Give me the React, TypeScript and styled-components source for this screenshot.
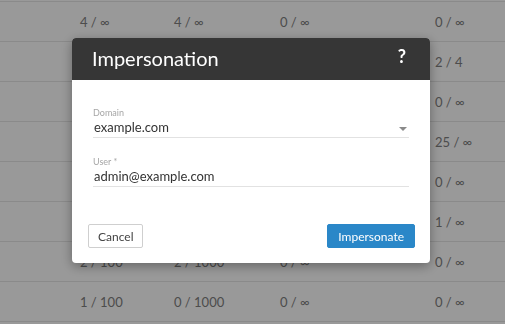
import React from 'react';
import styled, { createGlobalStyle } from 'styled-components';

const GlobalStyle = createGlobalStyle`
  html, body {
    margin: 0;
    padding: 0;
    background: #ffffff;
    font-family: Lato, "Open Sans", sans-serif;
    overflow: hidden;
  }
  * { box-sizing: border-box; }
`;

// Page behind the dialog
const Page = styled.div`
  width: 505px;
  height: 324px;
  padding-top: 1px;
  overflow: hidden;
`;

const Row = styled.div`
  display: grid;
  grid-template-columns: 80px 94px 106px 155px 1fr;
  align-items: center;
  height: 40px;
  border-top: 1px solid #e6e6e6;
  font-size: 13px;
  color: #808080;
`;

const Cell = styled.div`
  white-space: nowrap;
`;

// Dialog
const Backdrop = styled.div`
  position: fixed;
  inset: 0;
  background: rgba(0, 0, 0, 0.4);
  display: flex;
  justify-content: flex-start;
  align-items: flex-start;
  padding: 38px 0 0 72px;
`;

const Dialog = styled.div`
  width: 358px;
  background: #fff;
  border-radius: 4px;
  box-shadow: 0 3px 12px rgba(0, 0, 0, 0.35);
  overflow: hidden;
`;

const Header = styled.div`
  display: flex;
  align-items: center;
  justify-content: space-between;
  height: 42px;
  padding: 0 24px 2px 20px;
  background: #363636;
  color: #fff;
`;

const Title = styled.h2`
  margin: 0;
  font-size: 20px;
  font-weight: 400;
`;

const Help = styled.span`
  font-size: 18px;
  font-weight: 700;
  margin-top: -4px;
`;

const Body = styled.div`
  padding: 27px 21px 0 21px;
  display: flex;
  flex-direction: column;
  gap: 18px;
`;

const Field = styled.div`
  display: flex;
  flex-direction: column;
`;

const Label = styled.label`
  font-size: 9px;
  line-height: 12px;
  color: #a6a6a6;
`;

const Input = styled.div`
  position: relative;
  height: 19px;
  line-height: 17px;
  font-size: 13px;
  color: #333;
  padding-left: 1px;
  border-bottom: 1px solid #e2e2e2;
`;

const Caret = styled.span`
  position: absolute;
  right: 2px;
  top: 8px;
  width: 0;
  height: 0;
  border-left: 4px solid transparent;
  border-right: 4px solid transparent;
  border-top: 4px solid #8a8a8a;
`;

const Footer = styled.div`
  display: flex;
  justify-content: space-between;
  padding: 37px 15px 15px 16px;
`;

const Button = styled.button<{ $primary?: boolean }>`
  height: 24px;
  padding: 0 ${(p) => (p.$primary ? '10px' : '9px')};
  min-width: ${(p) => (p.$primary ? '84px' : '53px')};
  font-family: inherit;
  font-size: 12px;
  border-radius: 2px;
  border: 1px solid ${(p) => (p.$primary ? '#2a87c8' : '#cfcfcf')};
  background: ${(p) => (p.$primary ? '#2a87c8' : '#fff')};
  color: ${(p) => (p.$primary ? '#fff' : '#444')};
  cursor: pointer;
`;

// rows 2-6 sit behind the dialog
const rows = [
  ['', '4 / ∞', '4 / ∞', '0 / ∞', '0 / ∞'],
  ['', '1 / 10', '2 / 100', '0 / ∞', '2 / 4'],
  ['', '0 / ∞', '0 / ∞', '0 / ∞', '0 / ∞'],
  ['', '3 / 50', '7 / 500', '1 / ∞', '25 / ∞'],
  ['', '0 / ∞', '0 / ∞', '0 / ∞', '0 / ∞'],
  ['', '1 / ∞', '1 / ∞', '0 / ∞', '1 / ∞'],
  ['', '2 / 100', '2 / 1000', '0 / ∞', '0 / ∞'],
  ['', '1 / 100', '0 / 1000', '0 / ∞', '0 / ∞'],
  ['', '', '', '', ''],
];

export default function App() {
  return (
    <>
      <GlobalStyle />
      <Page>
        {rows.map((r, i) => (
          <Row key={i}>
            {r.map((c, j) => (
              <Cell key={j}>{c}</Cell>
            ))}
          </Row>
        ))}
      </Page>
      <Backdrop>
        <Dialog>
          <Header>
            <Title>Impersonation</Title>
            <Help>?</Help>
          </Header>
          <Body>
            <Field>
              <Label>Domain</Label>
              <Input>
                example.com
                <Caret />
              </Input>
            </Field>
            <Field>
              <Label>User *</Label>
              <Input>admin@example.com</Input>
            </Field>
          </Body>
          <Footer>
            <Button>Cancel</Button>
            <Button $primary>Impersonate</Button>
          </Footer>
        </Dialog>
      </Backdrop>
    </>
  );
}
